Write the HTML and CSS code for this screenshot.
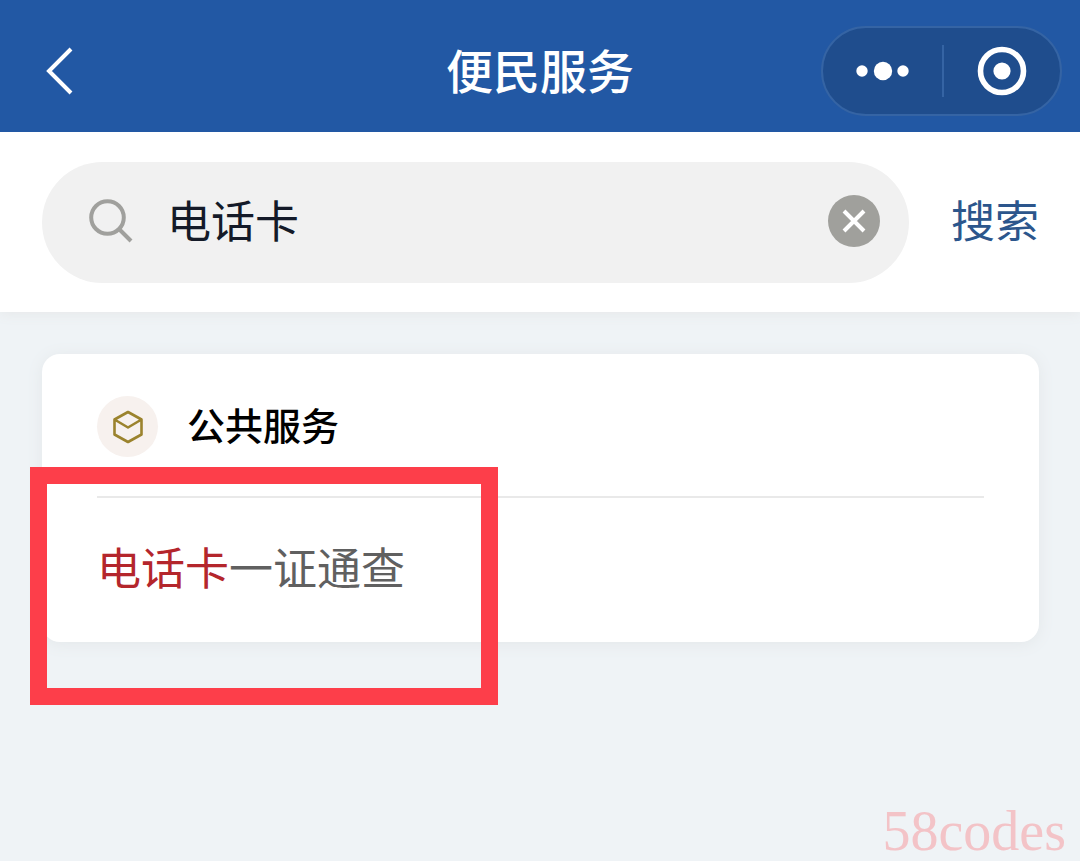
FILE: index.html
```html
<!DOCTYPE html>
<html lang="zh-CN">
<head>
<meta charset="utf-8">
<meta name="viewport" content="width=device-width, initial-scale=1">
<title>便民服务</title>
<link rel="stylesheet" href="styles.css">
</head>
<body>
<header class="navbar">
  <button class="back" type="button" aria-label="返回">
    <svg width="32" height="52" viewBox="0 0 32 52" fill="none" stroke="currentColor" stroke-width="4"><path d="M27 4 L5 26 L27 48"/></svg>
  </button>
  <h1 class="title">便民服务</h1>
  <div class="capsule">
    <button class="capsule-btn" type="button" aria-label="更多">
      <svg width="54" height="20" viewBox="0 0 54 20" fill="currentColor"><circle cx="6" cy="10" r="5.7"/><circle cx="27" cy="10" r="9.2"/><circle cx="47" cy="10" r="5.7"/></svg>
    </button>
    <span class="capsule-line"></span>
    <button class="capsule-btn" type="button" aria-label="关闭">
      <svg width="50" height="50" viewBox="0 0 50 50"><circle cx="25" cy="25" r="21.5" fill="none" stroke="currentColor" stroke-width="5.6"/><circle cx="25" cy="25" r="8.6" fill="currentColor"/></svg>
    </button>
  </div>
</header>

<form class="search" role="search">
  <div class="search-field">
    <svg class="search-icon" width="46" height="46" viewBox="0 0 46 46" fill="none" stroke="currentColor" stroke-width="4"><circle cx="19.500" cy="19.500" r="16.300"/><path d="M31 31 L43 43"/></svg>
    <input class="search-input" type="text" value="电话卡" aria-label="搜索关键词">
    <button class="clear" type="button" aria-label="清除">
      <svg width="24" height="24" viewBox="0 0 24 24" fill="none" stroke="currentColor" stroke-width="4"><path d="M2 2 L22 22 M22 2 L2 22"/></svg>
    </button>
  </div>
  <button class="search-submit" type="submit">搜索</button>
</form>

<main class="results">
  <section class="card">
    <div class="card-head">
      <span class="card-icon">
        <svg width="32" height="34" viewBox="0 0 32 34" fill="none" stroke="currentColor" stroke-width="2.600" stroke-linejoin="round"><path d="M16 2 L29.500 9.500 V24.500 L16 32 L2.500 24.500 V9.500 Z M2.500 9.500 L16 17.500 L29.500 9.500"/></svg>
      </span>
      <h2 class="card-title">公共服务</h2>
    </div>
    <a class="item" href="#"><span class="match">电话卡</span>一证通查</a>
    <span class="highlight"></span>
  </section>
</main>
<span class="watermark">58codes</span>
</body>
</html>
```

FILE: styles.css
```css
* { box-sizing: border-box; }

body {
  margin: 0;
  min-height: 100vh;
  background: #eff3f6;
  font-family: "Noto Sans CJK SC", sans-serif;
}

button {
  border: 0;
  padding: 0;
  background: none;
  color: inherit;
  font: inherit;
}

svg { display: block; }

.navbar {
  position: relative;
  z-index: 1;
  display: grid;
  grid-template-columns: 1fr auto 1fr;
  align-items: center;
  height: 132px;
  padding: 10px 18px 0 44px;
  background: #2258a4;
  color: #fff;
}

.back { justify-self: start; }

.title {
  margin: 0 26px 0 0;
  padding-bottom: 4px;
  font-size: 47px;
  font-weight: 500;
  line-height: 64px;
}

.capsule {
  display: flex;
  align-items: center;
  justify-self: end;
  width: 241px;
  height: 90px;
  padding-left: 2px;
  border: 2px solid #3564a4;
  border-radius: 45px;
  background: #1f4d8d;
}

.capsule-btn {
  display: flex;
  flex: 1;
  align-items: center;
  justify-content: center;
  height: 100%;
}

.capsule-line {
  width: 2px;
  height: 52px;
  background: #3564a4;
}

.search {
  display: flex;
  align-items: center;
  gap: 42px;
  padding: 30px 41px 29px 42px;
  background: #fff;
  box-shadow: 0 2px 12px #e6e8e9;
}

.search-field {
  display: flex;
  flex: 1;
  align-items: center;
  height: 121px;
  padding: 0 29px 4px 46px;
  border-radius: 61px;
  background: #f1f1f1;
}

.search-icon {
  flex: none;
  color: #a0a09d;
}

.search-input {
  flex: 1;
  min-width: 0;
  margin-left: 33px;
  padding: 0 0 4px;
  border: 0;
  outline: 0;
  background: none;
  color: #141a28;
  font: 400 44px/64px "Noto Sans CJK SC", sans-serif;
}

.clear {
  display: flex;
  flex: none;
  align-items: center;
  justify-content: center;
  width: 52px;
  height: 52px;
  border-radius: 50%;
  background: #a0a09c;
  color: #fff;
}

.search-submit {
  padding-bottom: 8px;
  color: #2c568c;
  font-size: 44px;
  line-height: 64px;
}

.results { padding: 42px 41px 42px 42px; }

.card {
  position: relative;
  padding: 42px 55px 0;
  border-radius: 18px;
  background: #fff;
  box-shadow: 0 2px 16px #e3e7e9;
}

.card-head {
  display: flex;
  align-items: center;
  gap: 29px;
  padding-bottom: 39px;
  border-bottom: 2px solid #e9e9e9;
}

.card-icon {
  display: flex;
  align-items: center;
  justify-content: center;
  width: 61px;
  height: 61px;
  border-radius: 50%;
  background: #f7f1ee;
  color: #9b832d;
}

.card-title {
  margin: 0;
  padding-bottom: 6px;
  color: #000;
  font-size: 38px;
  font-weight: 500;
  line-height: 50px;
}

.item {
  display: block;
  padding: 36px 0 44px;
  color: #606060;
  font-size: 44px;
  line-height: 64px;
  text-decoration: none;
}

.match { color: #b4262c; }

.highlight {
  position: absolute;
  top: 113px;
  left: -12px;
  width: 468px;
  height: 238px;
  border: 17px solid #fd3e4a;
  pointer-events: none;
}

.watermark {
  position: fixed;
  right: 14px;
  bottom: 0;
  color: #f3c3c7;
  font: 56px/60px "Liberation Serif", serif;
}
```
